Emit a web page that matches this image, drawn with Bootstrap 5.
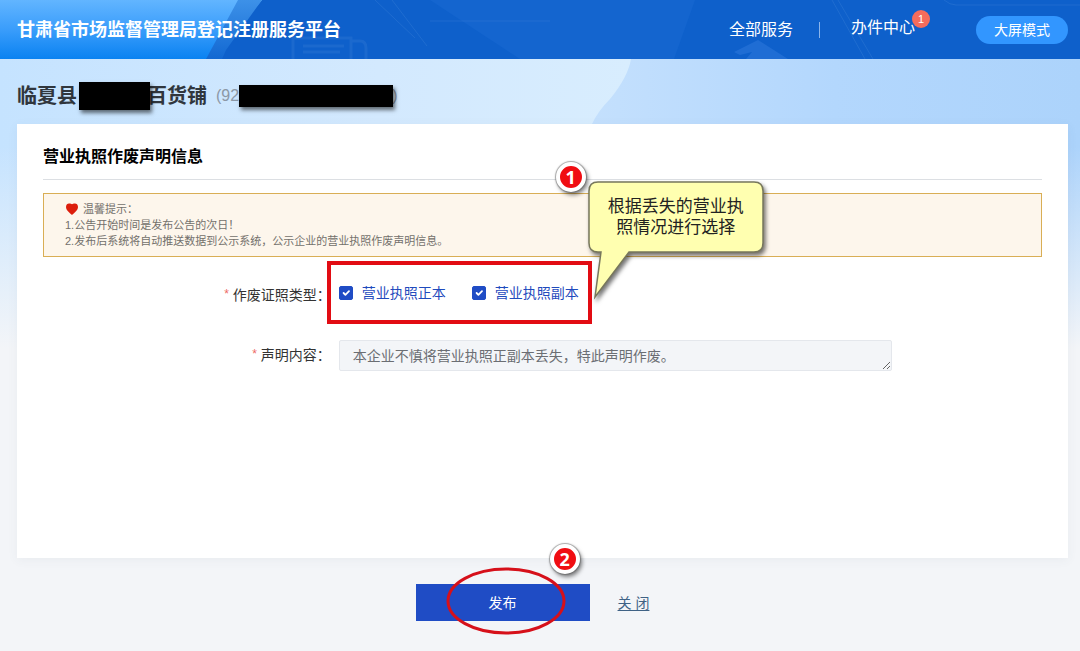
<!DOCTYPE html>
<html lang="zh-CN">
<head>
<meta charset="utf-8">
<meta name="viewport" content="width=device-width, initial-scale=1">
<title>甘肃省市场监督管理局登记注册服务平台</title>
<link href="https://cdn.jsdelivr.net/npm/bootstrap@5.3.0/dist/css/bootstrap.min.css" rel="stylesheet">
<style>
  body {
    font-family: "Liberation Sans", "Noto Sans CJK SC", sans-serif;
    font-size: 14px;
    line-height: 20px;
    color: #333;
    background: #f3f5f8;
  }
  /* header */
  .site-header { min-height: 59px; background: #0d5fc9; padding: 0 12px 0 17px; }
  .header-art { top: 0; left: 0; width: 100%; height: 100%; }
  .site-brand { font-size: 18px; font-weight: 700; color: #fff; text-decoration: none; }
  .site-nav a { font-size: 16px; color: #fff; text-decoration: none; }
  .nav-rule { width: 1px; height: 16px; background: #8bb4ea; margin: 0 31px 0 26px; }
  .count-badge {
    top: -8px; right: -15px; width: 18px; height: 18px; padding: 0;
    border-radius: 50%; background: #f56c5c; color: #fff;
    font-size: 11px; line-height: 18px; font-weight: 400; text-align: center;
  }
  .site-nav .nav-cases { padding-bottom: 3px; }
  .btn-screen {
    height: 28px; padding: 0 18px; margin-left: 61px; border: 0; border-radius: 14px;
    background: #3296ff; color: #fff; font-size: 14px; line-height: 28px;
  }
  /* page */
  .page-art { top: 0; left: 0; width: 100%; height: 290px; z-index: -1; }
  .page-main { padding: 0 12px 0 17px; z-index: 0; }
  .shop-title { height: 65px; padding-top: 8px; font-size: 20px; line-height: 28px; font-weight: 700; color: #30363d; margin: 0; }
  .shop-code { font-size: 16px; font-weight: 400; color: #8c98a6; margin-left: 9px; }
  .redact { background: #000; box-shadow: 2px 3px 4px rgba(0,0,0,.55); z-index: 1; }
  .redact-name { width: 71px; height: 28px; margin: 0 -3px 0 2px; }
  .redact-code { width: 154px; height: 22px; margin-right: -1px; }
  .panel { background: #fff; padding: 22px 26px 40px; box-shadow: 0 2px 10px rgba(60,80,110,.06); }
  .panel-title { font-size: 16px; line-height: 22px; font-weight: 700; color: #000; padding-bottom: 11px; margin: 0 0 13px; border-bottom: 1px solid #dcdfe3; }
  .notice { border: 1px solid #d9ae55; background: #fdf6ec; color: #73706b; font-size: 11px; line-height: 16px; padding: 7px 21px; }
  .form-line { display: grid; grid-template-columns: 29% 1fr 15%; }
  .form-line > :nth-child(1) { padding-right: 2px; }
  .form-line > :nth-child(2) { padding-left: 6px; }
  .star { color: #ee6a64; font-size: 12px; vertical-align: 2px; }
  .choice-box { border: 4px solid #e20c13; height: 63px; padding: 0 9px 0 8px; margin-left: -12px; gap: 26px; }
  .choice { color: #1f4bbd; gap: 9px; }
  .choice .form-check-input { width: 14px; height: 14px; margin: 0; border-radius: 2px; flex: none; }
  .choice .form-check-input:checked { background-color: #1f4cc5; border-color: #1f4cc5; }
  .form-line .statement {
    height: 31px; min-height: 31px; border-radius: 2px; border-color: #e4e7ec;
    background: #f3f5f8; color: #6b6e73; font-size: 14px; line-height: 20px;
    padding: 5px 13px; overflow: hidden;
  }
  /* actions */
  .actions { padding: 26px 0 30px; }
  .btn-publish { width: 174px; height: 37px; border: 0; border-radius: 0; background: #1f4cc5; color: #fff; font-size: 14px; line-height: 20px; }
  .close-link { color: #3f6285; margin-left: 14px; padding: 0 20px 0 14px; text-underline-offset: 2px; }
  /* step marks */
  .step-mark {
    width: 30px; height: 30px; border-radius: 50%; border: 4px solid #fff; background: #f00d12; color: #fff;
    font: 700 18px/22px "Open Sans", sans-serif; text-align: center;
    box-shadow: 0 0 1px 1px rgba(90,90,90,.5), 2px 3px 4px rgba(0,0,0,.5); z-index: 3;
  }
  .mark-one { top: -103px; right: 2px; }
  .mark-two { top: -40px; right: 10px; }
  .callout { top: -86px; left: calc(100% - 1px); width: 178px; height: 122px; z-index: 2; }
  .callout svg { top: 0; left: 0; filter: drop-shadow(2px 3px 2px rgba(0,0,0,.55)); }
  .callout-text { padding-top: 17px; font-size: 17px; line-height: 21px; color: #222; text-align: center; margin: 0 18px; }
  .ring { top: -17px; left: 30px; width: 120px; height: 68px; pointer-events: none; }
</style>
</head>
<body class="d-flex flex-column min-vh-100">

<header class="site-header position-relative d-flex align-items-center justify-content-between overflow-hidden">
  <svg class="header-art position-absolute" viewBox="0 0 1080 59" preserveAspectRatio="xMinYMin slice" aria-hidden="true">
    <defs>
      <linearGradient id="sky" x1="0" y1="0" x2="0" y2="1"><stop offset="0" stop-color="#62b5ff"/><stop offset=".5" stop-color="#3a9dfb"/><stop offset="1" stop-color="#0a82f1"/></linearGradient>
      <linearGradient id="sky2" x1="0" y1="0" x2="0" y2="1"><stop offset="0" stop-color="#3d91e8"/><stop offset="1" stop-color="#1268d2"/></linearGradient>
    </defs>
    <path d="M0 0H1080V59H0Z" fill="#0e60cb"/>
    <path d="M430 0H695L674 59H520Z" fill="#1465cf"/>
    <path d="M0 0H262L212 59H0Z" fill="url(#sky)"/>
    <path d="M238 0H262L226 50L222 59H206Z" fill="url(#sky2)"/>
    <path d="M375 0L415 38M392 0L427 46M430 21H550M832 0L865 59M838 0L873 59M944 0Q950 5 956 5H1080" fill="none" stroke="#3a7fd8" stroke-opacity=".4"/>
    <path d="M293 59V38H351V59M303 46H344M303 52H340M352 41H360Q366 41 366 48V59" fill="none" stroke="#3a7fd8" stroke-opacity=".3" stroke-width="3"/>
    <path d="M734 52L758 40L788 59H746L752 52L740 55Z" fill="#1f6dd4"/>
  </svg>
  <a class="site-brand position-relative" href="#">甘肃省市场监督管理局登记注册服务平台</a>
  <nav class="site-nav position-relative d-flex align-items-center">
    <a href="#">全部服务</a>
    <span class="nav-rule"></span>
    <a class="nav-cases position-relative" href="#">办件中心<span class="count-badge position-absolute">1</span></a>
    <button type="button" class="btn btn-screen">大屏模式</button>
  </nav>
</header>

<main class="page-main position-relative flex-grow-1 d-flex flex-column">
  <svg class="page-art position-absolute" viewBox="0 0 1080 290" preserveAspectRatio="none" aria-hidden="true">
    <defs>
      <linearGradient id="left-air" x1="0" y1="0" x2="1" y2="0"><stop offset="0" stop-color="#c5e3ff"/><stop offset=".6" stop-color="#d3e9fe"/><stop offset="1" stop-color="#d8edfe"/></linearGradient>
      <linearGradient id="right-air" x1="0" y1="0" x2="1" y2="0"><stop offset="0" stop-color="#c4e0fd"/><stop offset=".5" stop-color="#b3d7fd"/><stop offset="1" stop-color="#acd3fb"/></linearGradient>
      <linearGradient id="fade" x1="0" y1="0" x2="0" y2="1"><stop offset=".3" stop-color="#f3f5f8" stop-opacity="0"/><stop offset="1" stop-color="#f3f5f8"/></linearGradient>
    </defs>
    <path d="M590 0H1080V290H590Z" fill="url(#right-air)"/>
    <path d="M0 0H631Q628 18 610 40Q598 52 592 65V290H0Z" fill="url(#left-air)"/>
    <path d="M0 0H1080V290H0Z" fill="url(#fade)"/>
  </svg>

  <h1 class="shop-title d-flex align-items-center">
    <span>临夏县</span><span class="redact redact-name position-relative"></span><span>百货铺</span>
    <span class="shop-code d-flex align-items-center">(92<span class="redact redact-code position-relative"></span>)</span>
  </h1>

  <section class="panel flex-grow-1">
    <h2 class="panel-title">营业执照作废声明信息</h2>
    <div class="notice">
      <div class="d-flex align-items-center">
        <svg class="me-1" width="14" height="12" viewBox="0 0 14 12" aria-hidden="true"><path d="M7 12C5 10 1 7.500 1 4C1 1.500 2.500 .5 4 .5C5.500 .5 6.500 .8 7 1.300C7.500 .8 8.500 .5 10 .5C11.500 .5 13 1.500 13 4C13 7.500 9 10 7 12Z" fill="#dc1e0c"/></svg>
        <span>温馨提示：</span>
      </div>
      <div>1.公告开始时间是发布公告的次日！</div>
      <div>2.发布后系统将自动推送数据到公示系统，公示企业的营业执照作废声明信息。</div>
    </div>

    <form>
      <div class="form-line align-items-center mt-1" role="group" aria-labelledby="kind">
        <div id="kind" class="text-end pt-1"><span class="star">*</span> 作废证照类型：</div>
        <div>
          <div class="choice-box position-relative d-inline-flex align-items-center align-top">
            <label class="choice d-flex align-items-center"><input class="form-check-input" type="checkbox" checked>营业执照正本</label>
            <label class="choice d-flex align-items-center"><input class="form-check-input" type="checkbox" checked>营业执照副本</label>
            <span class="step-mark mark-one position-absolute">1</span>
            <div class="callout position-absolute">
              <svg class="position-absolute" width="178" height="122" viewBox="0 0 178 122" aria-hidden="true">
                <path d="M11 3H167Q176 3 176 12V64Q176 73 167 73H42L8 118L14 73H11Q2 73 2 64V12Q2 3 11 3Z" fill="#ffffb0" stroke="#77775c" stroke-width="1.500"/>
              </svg>
              <p class="callout-text position-relative">根据丢失的营业执照情况进行选择</p>
            </div>
          </div>
        </div>
      </div>
      <div class="form-line mt-3">
        <label for="statement" class="text-end pt-1"><span class="star">*</span> 声明内容：</label>
        <div><textarea id="statement" class="form-control statement" rows="1" readonly>本企业不慎将营业执照正副本丢失，特此声明作废。</textarea></div>
      </div>
    </form>
  </section>

  <div class="actions d-flex justify-content-center align-items-center">
    <div class="position-relative">
      <button type="button" class="btn btn-publish">发布</button>
      <svg class="ring position-absolute" viewBox="0 0 120 68" aria-hidden="true"><ellipse cx="60" cy="34" rx="58" ry="32" fill="none" stroke="#d6101a" stroke-width="3"/></svg>
      <span class="step-mark mark-two position-absolute">2</span>
    </div>
    <a class="close-link" href="#">关 闭</a>
  </div>
</main>

<script src="https://cdn.jsdelivr.net/npm/bootstrap@5.3.0/dist/js/bootstrap.bundle.min.js"></script>
</body>
</html>
